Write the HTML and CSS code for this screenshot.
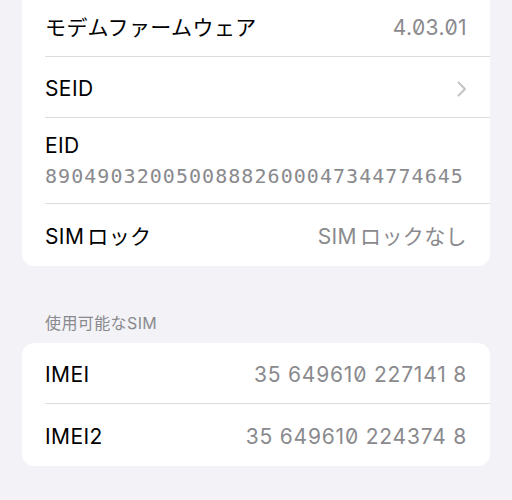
FILE: index.html
```html
<!DOCTYPE html>
<html lang="ja">
<head>
<meta charset="utf-8">
<link rel="stylesheet" href="styles.css">
</head>
<body>
<div class="page">
  <div class="card card-top">
    <div class="row">
      <div class="row-inner sep">
        <span class="label">モデムファームウェア</span>
        <span class="value num ver">4.03.01</span>
      </div>
    </div>
    <div class="row">
      <div class="row-inner sep">
        <span class="label">SEID</span>
        <svg class="chev" width="10" height="16" viewBox="0 0 10 16"><path d="M1.5 1.5 L8 8 L1.5 14.5" fill="none" stroke="#c4c4c7" stroke-width="2" stroke-linecap="round" stroke-linejoin="round"/></svg>
      </div>
    </div>
    <div class="row">
      <div class="row-inner sep stack">
        <span class="label">EID</span>
        <span class="eid">89049032005008882600047344774645</span>
      </div>
    </div>
    <div class="row">
      <div class="row-inner last">
        <span class="label">SIM<span class="jgap">ロック</span></span>
        <span class="value wide">SIM<span class="jgap">ロックなし</span></span>
      </div>
    </div>
  </div>

  <div class="section-header">使用可能なSIM</div>

  <div class="card">
    <div class="row">
      <div class="row-inner sep">
        <span class="label">IMEI</span>
        <span class="value num imei">35 649610 227141 8</span>
      </div>
    </div>
    <div class="row">
      <div class="row-inner last">
        <span class="label">IMEI2</span>
        <span class="value num imei">35 649610 224374 8</span>
      </div>
    </div>
  </div>
</div>
</body>
</html>
```

FILE: styles.css
```css
html, body {
  margin: 0;
  padding: 0;
  background: #f2f2f7;
}
body {
  font-family: "Inter", "Noto Sans CJK JP", sans-serif;
  color: #000;
  width: 512px;
  height: 500px;
  overflow: hidden;
}
.page {
  padding: 0 22px;
}
.card {
  background: #fff;
  border-radius: 12px;
  overflow: hidden;
}
.card-top {
  margin-top: -4px;
  border-top-left-radius: 0;
  border-top-right-radius: 0;
}
.row {
  padding-left: 23px;
}
.row-inner {
  box-sizing: border-box;
  display: flex;
  align-items: center;
  justify-content: space-between;
  height: 61px;
  padding-top: 4px;
  padding-right: 23px;
}
.row-inner.sep {
  border-bottom: 1px solid #dcdce0;
}
.row-inner.last {
  height: 62px;
}
.row-inner.stack {
  height: auto;
  flex-direction: column;
  align-items: flex-start;
  justify-content: flex-start;
  padding-top: 14px;
  padding-bottom: 13px;
  gap: 2px;
}
.label {
  font-size: 21px;
  line-height: 28px;
  letter-spacing: 0.4px;
}
.value {
  font-size: 21px;
  line-height: 28px;
  color: #8a8a8e;
}
.value.wide {
  letter-spacing: 0.4px;
}
.jgap {
  margin-left: 3px;
}
.num {
  font-feature-settings: "zero" 1;
}
.ver {
  letter-spacing: 0.4px;
}
.imei {
  letter-spacing: 0.8px;
}
.eid {
  font-family: "DejaVu Sans Mono", monospace;
  font-size: 20px;
  line-height: 28px;
  letter-spacing: 1.05px;
  color: #8a8a8e;
}
.section-header {
  font-size: 16px;
  line-height: 20px;
  letter-spacing: 0.4px;
  color: #8a8a8e;
  padding-left: 23px;
  margin-top: 47px;
  margin-bottom: 10px;
}
```
